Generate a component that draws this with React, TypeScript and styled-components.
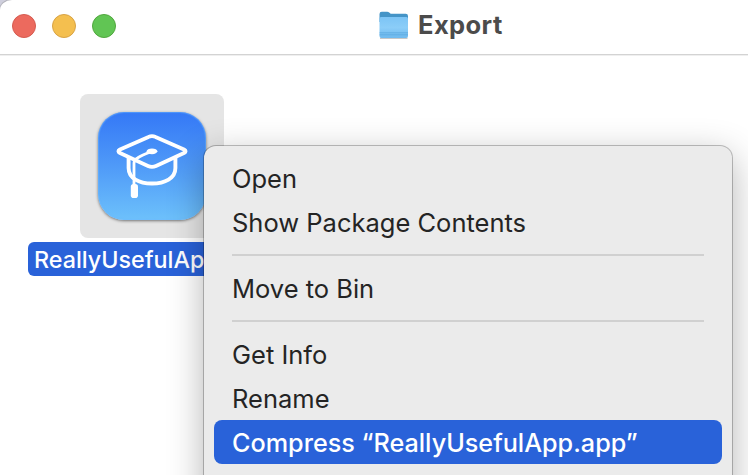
import React from "react";
import styled, { createGlobalStyle } from "styled-components";

const GlobalStyle = createGlobalStyle`
  * { box-sizing: border-box; }
  body {
    margin: 0;
    background: #cfcfdd;
    font-family: Inter, "Liberation Sans", sans-serif;
    overflow: hidden;
  }
`;

const Window = styled.div`
  position: relative;
  width: 748px;
  height: 475px;
  overflow: hidden;
  background: #fff;
  border-top-left-radius: 12px 10px;
  box-shadow: 0 0 0 1px #b4b4bc;
`;

const TitleBar = styled.header`
  display: grid;
  grid-template-columns: 378px 1fr;
  align-items: center;
  height: 55px;
  padding-bottom: 3px;
  border-bottom: 1px solid #d3d3d3;
  box-shadow: 0 1px 0 #efefef;
`;

const Lights = styled.div`
  display: flex;
  gap: 16px;
  padding-left: 12px;
`;

const Light = styled.span<{ $fill: string; $edge: string }>`
  width: 24px;
  height: 24px;
  border-radius: 50%;
  background: ${(p) => p.$fill};
  border: 1px solid ${(p) => p.$edge};
`;

const Title = styled.h1`
  display: flex;
  align-items: center;
  gap: 8px;
  height: 32px;
  margin: 0 0 2px;
  color: #4b4b4b;
  font-size: 25.5px;
  line-height: 32px;
  font-weight: 700;
  letter-spacing: 0.4px;
`;

const Files = styled.main`
  display: flex;
  padding: 39px 28px;
`;

const FileItem = styled.div`
  display: flex;
  flex-direction: column;
  align-items: center;
  gap: 4px;
  width: 248px;
`;

const Tile = styled.div`
  display: grid;
  place-items: center;
  width: 144px;
  height: 144px;
  border-radius: 8px;
  background: #e5e5e5;
`;

const AppIcon = styled.div`
  width: 108px;
  height: 108px;
  border-radius: 26px;
  background: linear-gradient(#3478f6, #4f9af8 50%, #6dc1fb);
  box-shadow: 0 1px 3px rgba(0, 0, 0, 0.5), inset 0 0 1px 1px rgba(110, 185, 255, 0.5);

  svg { display: block; }
`;

const FileName = styled.div`
  width: 248px;
  height: 34px;
  padding-left: 6px;
  border-radius: 6px;
  background: #2962d9;
  color: #fff;
  font-size: 23.3px;
  font-weight: 500;
  line-height: 35px;
  white-space: nowrap;
`;

const Menu = styled.ul`
  position: absolute;
  left: 204px;
  top: 146px;
  width: 528px;
  height: 400px;
  margin: 0;
  padding: 10px;
  list-style: none;
  border-radius: 12px;
  background: #ebebeb;
  box-shadow: 0 0 0 1px rgba(0, 0, 0, 0.24), 0 10px 36px rgba(0, 0, 0, 0.3);
`;

const MenuItem = styled.li<{ $active?: boolean }>`
  height: 44px;
  padding-left: 18px;
  border-radius: 8px;
  background: ${(p) => (p.$active ? "#2962d9" : "transparent")};
  color: ${(p) => (p.$active ? "#fff" : "#242424")};
  font-size: ${(p) => (p.$active ? 25.2 : 25.5)}px;
  font-weight: ${(p) => (p.$active ? 500 : 400)};
  line-height: 46px;
  white-space: nowrap;
`;

const Divider = styled.li`
  height: 2px;
  margin: 10px 18px;
  background: #d0d0d0;
`;

const Folder = () => (
  <svg width="32" height="28" viewBox="0 0 32 28">
    <defs>
      <linearGradient id="folder" x1="0" y1="0" x2="0" y2="1">
        <stop offset="0" stopColor="#7cc4f5" />
        <stop offset=".5" stopColor="#8bcdf8" />
        <stop offset="1" stopColor="#6eb9ee" />
      </linearGradient>
    </defs>
    <path d="M2 27.2h27.5" stroke="#999" strokeWidth="1.4" opacity=".6" />
    <path d="M1.5 3q0-2.2 2.3-2.2h5.4q1.2 0 2 .8l1.5 1.2h15q2.3 0 2.3 2.3V11H1.5z" fill="#4494c7" />
    <path d="M1.5 7.5Q1.5 6 3 6H28.5Q30 6 30 7.5V25q0 2-2 2H3.5q-2 0-2-2z" fill="url(#folder)" />
    <path d="M1.5 21.8H30M1.5 23.8H30" stroke="#4d9fd6" strokeWidth=".6" />
  </svg>
);

const GraduationCap = () => (
  <svg width="108" height="108" viewBox="0 0 108 108" fill="none" stroke="#fff" strokeWidth="3.8" strokeLinecap="round" strokeLinejoin="round">
    <path d="M50.5 24.9Q54 23.2 57.5 24.9L86 37.4Q89.2 39.2 86 41.1L58 54Q54 55.8 50 54L22 41.1Q18.8 39.2 22 37.4Z" />
    <path d="M30.6 46V56C30.6 66.2 41 71.5 54 71.5S77.4 66.2 77.4 56V46" strokeWidth="3.9" />
    <path d="M52.5 40Q44 43 39.5 46Q36 48 36 51V75" strokeWidth="2.8" />
    <ellipse cx="54" cy="39.3" rx="5.4" ry="2.9" fill="#fff" stroke="none" />
    <rect x="32.8" y="72" width="7.2" height="14" rx="2.8" fill="#fff" stroke="none" />
  </svg>
);

export default function App() {
  return (
    <>
      <GlobalStyle />
      <Window>
        <TitleBar>
          <Lights>
            <Light $fill="#ec6a5e" $edge="#d55b50" />
            <Light $fill="#f4bf4f" $edge="#d8a345" />
            <Light $fill="#61c554" $edge="#51a73e" />
          </Lights>
          <Title>
            <Folder />
            Export
          </Title>
        </TitleBar>
        <Files>
          <FileItem>
            <Tile>
              <AppIcon>
                <GraduationCap />
              </AppIcon>
            </Tile>
            <FileName>ReallyUsefulApp.app</FileName>
          </FileItem>
        </Files>
        <Menu>
          <MenuItem>Open</MenuItem>
          <MenuItem>Show Package Contents</MenuItem>
          <Divider />
          <MenuItem>Move to Bin</MenuItem>
          <Divider />
          <MenuItem>Get Info</MenuItem>
          <MenuItem>Rename</MenuItem>
          <MenuItem $active>Compress “ReallyUsefulApp.app”</MenuItem>
        </Menu>
      </Window>
    </>
  );
}
